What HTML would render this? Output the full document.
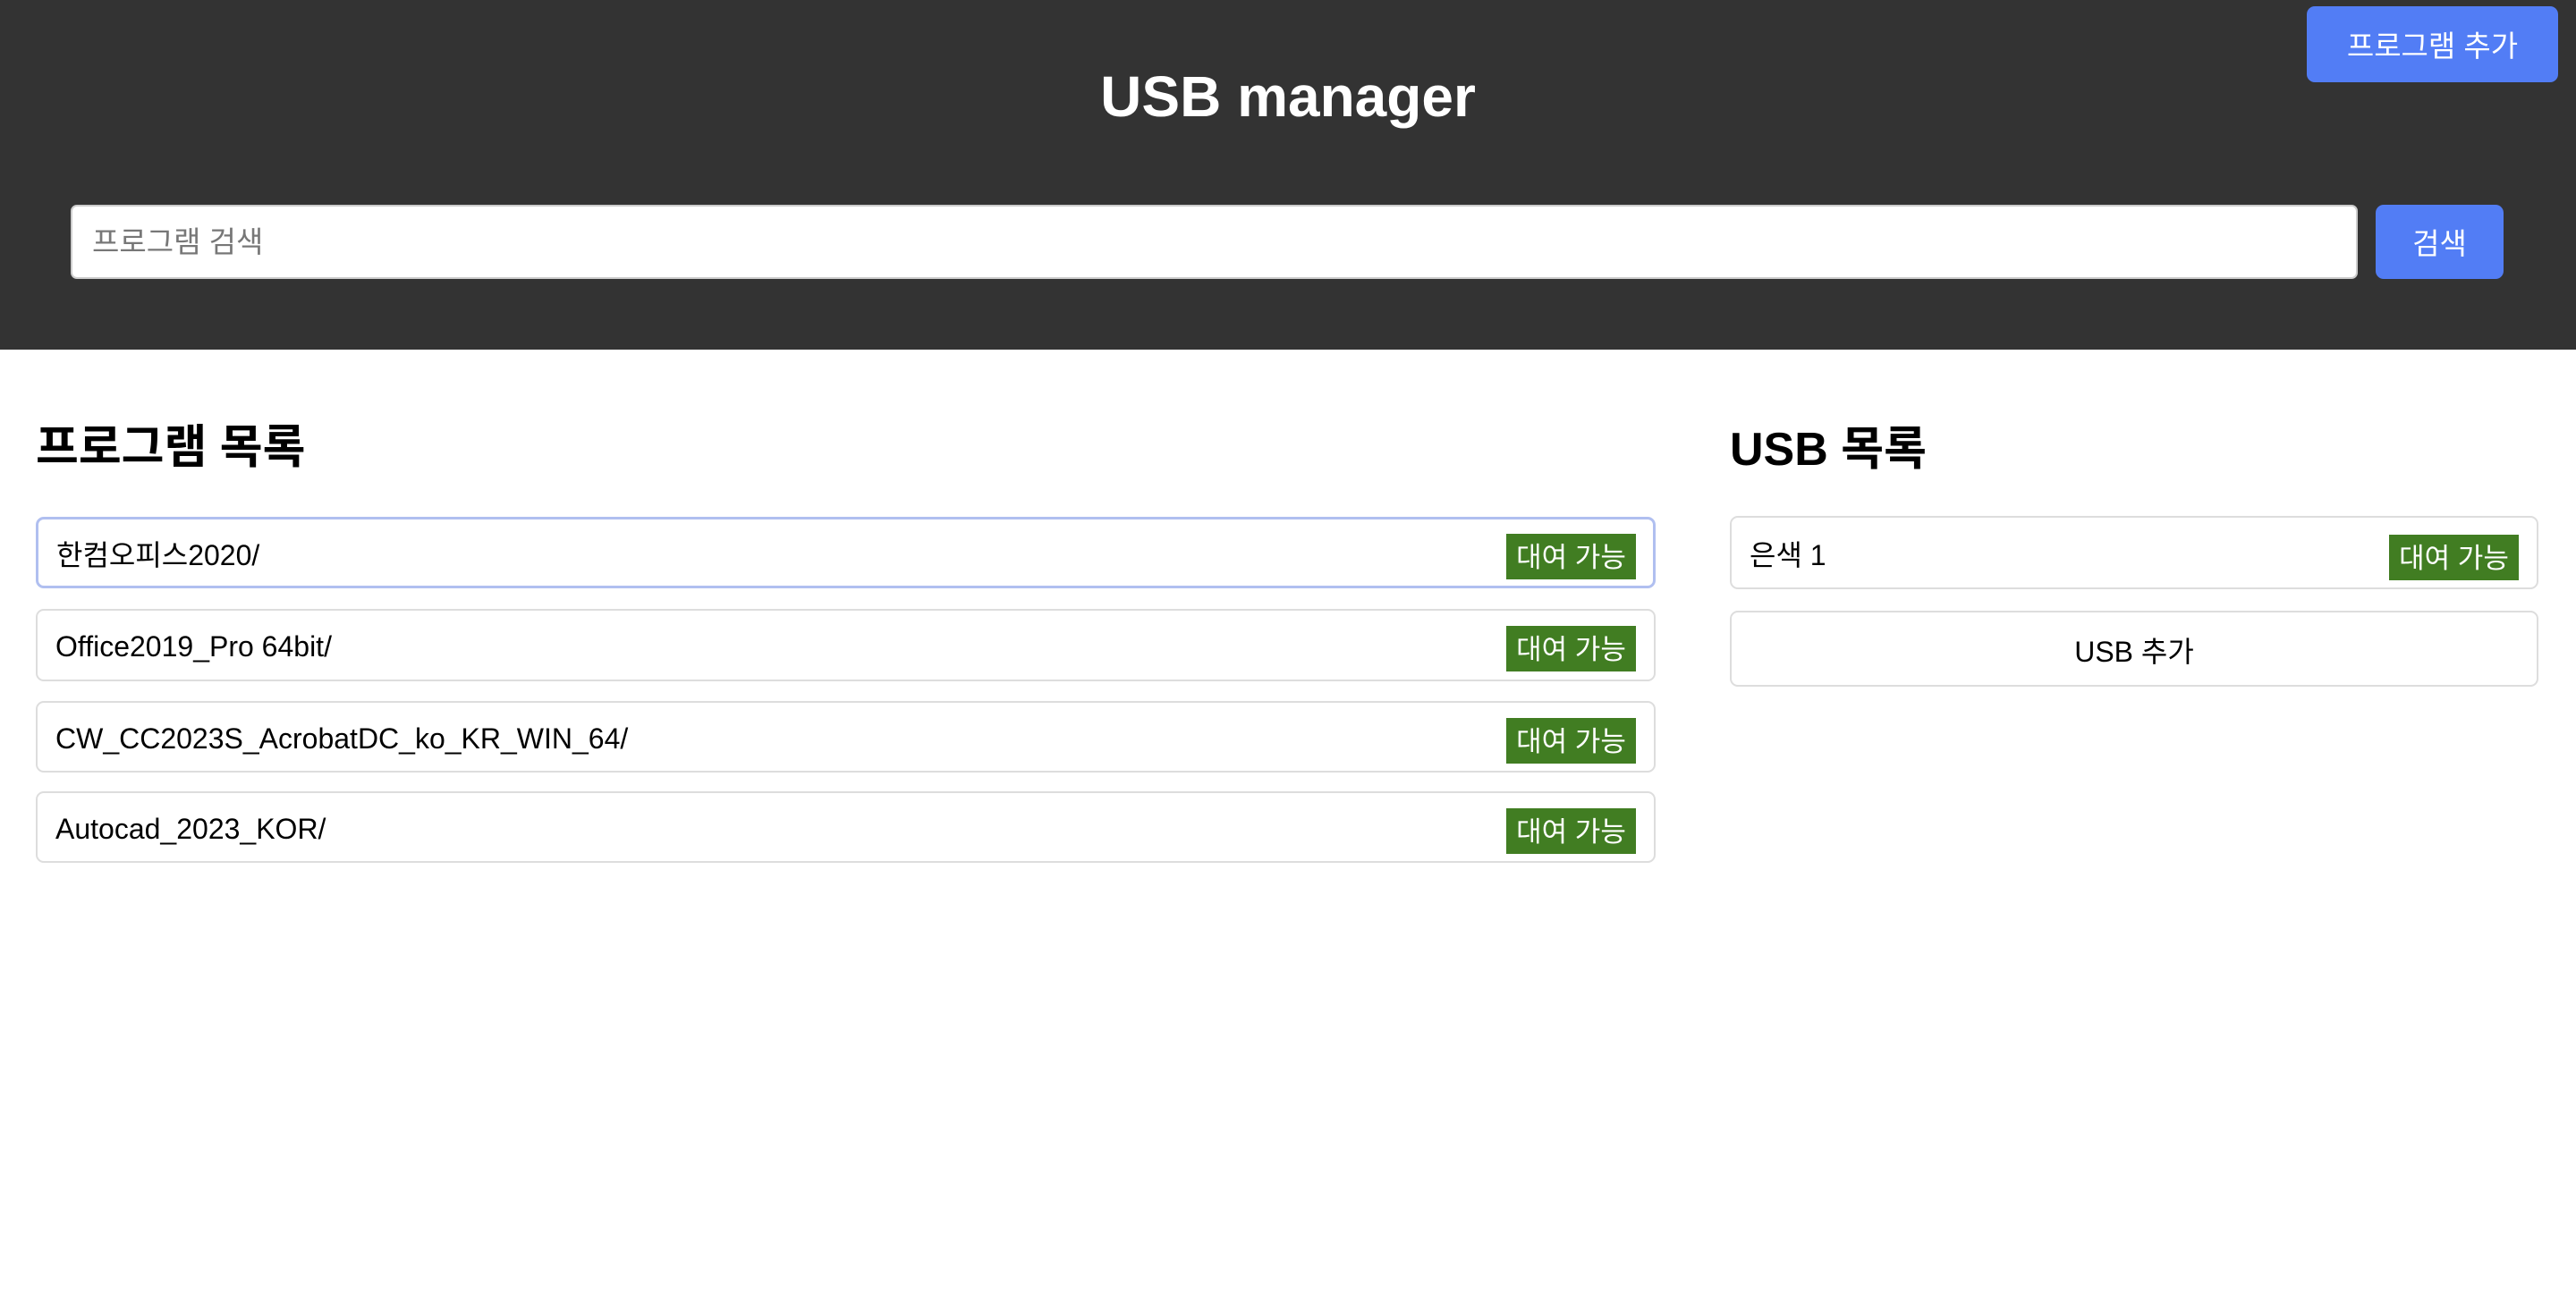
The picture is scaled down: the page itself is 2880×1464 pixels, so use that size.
<!DOCTYPE html>
<html><head><meta charset="utf-8"><style>
*{box-sizing:border-box;margin:0;padding:0}
body{width:2880px;height:1464px;background:#fff;font-family:"Liberation Sans","Noto Sans CJK KR",sans-serif;position:relative;overflow:hidden}
.hdr{position:absolute;left:0;top:0;width:2880px;height:391px;background:#333}
.title{position:absolute;left:0;width:2880px;top:66px;text-align:center;color:#fff;font-weight:bold;font-size:64px;line-height:84px}
.addbtn{position:absolute;left:2579px;top:7px;width:281px;height:85px;background:#527df5;border-radius:9px;color:#fff;font-size:33px;line-height:89px;text-align:center}
.search{position:absolute;left:79px;top:229px;width:2557px;height:83px;background:#fff;border:2px solid #ccc;border-radius:7px;color:#777;font-size:33px;line-height:79px;padding-left:22px}
.sbtn{position:absolute;left:2656px;top:229px;width:143px;height:83px;background:#527df5;border-radius:9px;color:#fff;font-size:33px;line-height:87px;text-align:center}
h2{position:absolute;font-size:52px;font-weight:bold;color:#000;line-height:60px}
.item{position:absolute;border:2px solid #ddd;border-radius:9px;background:#fff;font-size:32px;color:#000;padding-left:20px}
.item.f{border:3px solid #b0bff0}
.badge{position:absolute;right:20px;top:17px;height:51px;width:145px;background:#417d22;color:#fff;font-size:31px;line-height:53px;text-align:center}
</style></head><body>
<div class="hdr">
<div class="title">USB manager</div>
<div class="addbtn">프로그램 추가</div>
<div class="search">프로그램 검색</div>
<div class="sbtn">검색</div>
</div>
<h2 style="left:40px;top:471px">프로그램 목록</h2>
<h2 style="left:1934px;top:473px">USB 목록</h2>
<div class="item f" style="left:40px;top:578px;width:1811px;height:80px;line-height:80px">한컴오피스2020/<div class="badge" style="top:16px;right:19px">대여 가능</div></div>
<div class="item" style="left:40px;top:681px;width:1811px;height:81px;line-height:80px">Office2019_Pro 64bit/<div class="badge">대여 가능</div></div>
<div class="item" style="left:40px;top:784px;width:1811px;height:80px;line-height:80px">CW_CC2023S_AcrobatDC_ko_KR_WIN_64/<div class="badge">대여 가능</div></div>
<div class="item" style="left:40px;top:885px;width:1811px;height:80px;line-height:80px">Autocad_2023_KOR/<div class="badge">대여 가능</div></div>
<div class="item" style="left:1934px;top:577px;width:904px;height:82px;line-height:84px">은색 1<div class="badge" style="right:20px;top:19px">대여 가능</div></div>
<div class="item" style="left:1934px;top:683px;width:904px;height:85px;line-height:88px;padding:0;text-align:center">USB 추가</div>
</body></html>
